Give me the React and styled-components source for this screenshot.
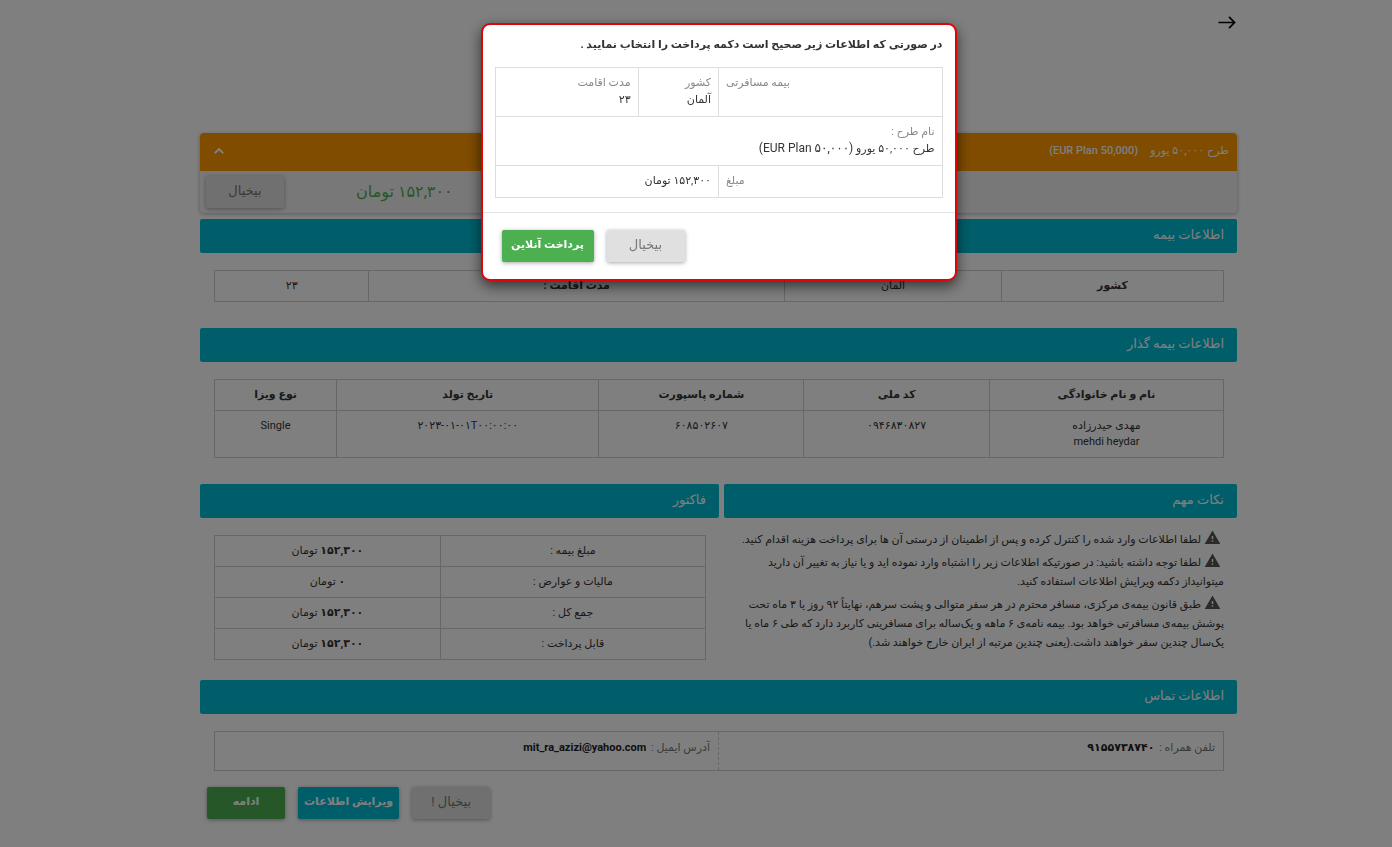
import React from "react";
import styled, { createGlobalStyle } from "styled-components";
import { MdExpandLess, MdWarning } from "react-icons/md";

const GlobalStyle = createGlobalStyle`
  * {
    box-sizing: border-box;
  }
  body {
    margin: 0;
    background: #ffffff;
    color: #333333;
    font-family: Roboto, "DejaVu Sans", sans-serif;
    font-size: 11px;
    line-height: 16px;
  }
`;

const Page = styled.div`
  min-height: 100vh;
  padding: 14px 155px 28px 200px;
`;

const TopBar = styled.header`
  display: flex;
  height: 119px;
`;

const BackLink = styled.a`
  height: 18px;
  color: #000000;

  svg {
    display: block;
  }
`;

const PlanCard = styled.section`
  margin-bottom: 6px;

  border-radius: 4px;
  background: #f1f1f1;
  box-shadow: 0 1px 4px rgba(0, 0, 0, 0.3);
`;

const PlanHeader = styled.div`
  display: flex;
  align-items: center;
  gap: 12px;

  height: 38px;
  padding: 0 8px 2px 10px;

  border-radius: 4px 4px 0 0;
  background: #ff9800;
  color: #ffffff;
  font-weight: 500;
`;

const CollapseButton = styled.button`
  display: flex;
  margin-right: auto;
  padding: 0;

  border: none;
  background: none;
  color: #ffffff;
  font-size: 18px;

  path:last-child {
    stroke: currentColor;
    stroke-width: 1;
  }
`;

const PlanBody = styled.div`
  display: flex;
  align-items: center;
  justify-content: flex-end;
  gap: 72px;

  height: 42px;
  padding: 0 6px;
`;

const Price = styled.span`
  color: #4caf50;
  font-size: 16px;
  line-height: 24px;
`;

const COLORS = {
  gray: { background: "#e0e0e0", color: "#777777" },
  green: { background: "#4caf50", color: "#ffffff" },
  teal: { background: "#00bcd4", color: "#ffffff" },
};

const Button = styled.button`
  min-width: ${({ $wide }) => ($wide ? "92px" : "78px")};
  height: 32px;
  padding: 0 6px 3px;

  border: none;
  border-radius: 2px;
  background: ${({ $tone }) => COLORS[$tone].background};
  color: ${({ $tone }) => COLORS[$tone].color};
  box-shadow: 0 1px 4px rgba(0, 0, 0, 0.35);

  font-family: inherit;
  font-size: ${({ $tone }) => ($tone === "gray" ? "13px" : "11px")};
  font-weight: ${({ $tone }) => ($tone === "gray" ? "normal" : "bold")};
  white-space: nowrap;
`;

const SectionTitle = styled.h2`
  height: 34px;
  margin: 0;
  padding: 6px 13px;

  border-radius: 2px;
  background: #00bcd4;
  color: #ffffff;
  font-size: 13px;
  font-weight: 500;
  line-height: 20px;
`;

const SectionBody = styled.div`
  padding: 17px 13px 26px 14px;
`;

const InvoiceBody = styled(SectionBody)`
  padding-bottom: 20px;
`;

const ContactBody = styled(SectionBody)`
  padding-bottom: 16px;
`;

const Table = styled.table`
  width: 100%;

  border-collapse: collapse;
  table-layout: fixed;

  th,
  td {
    height: 31px;
    padding: 7px;

    border: 1px solid #cfcfcf;
    text-align: center;
    vertical-align: top;
  }
`;

const Columns = styled.div`
  display: grid;
  grid-template-columns: 513fr 519fr;
  gap: 5px;
`;

const Notes = styled.div`
  padding: 11px 13px 0 0;

  line-height: 19px;
  white-space: nowrap;

  p {
    margin: 0 0 3px;
  }
  svg {
    margin: 0 3px;

    color: #555555;
    font-size: 17px;
    vertical-align: -3px;
  }
`;

const Contact = styled.div`
  display: grid;
  grid-template-columns: 1fr 1fr;

  height: 40px;

  border: 1px solid #cfcfcf;
  color: #777777;

  div {
    padding: 8px;
  }
  div + div {
    border-right: 1px dashed #cfcfcf;
  }
  strong {
    margin-right: 2px;
    color: #222222;
  }
`;

const Actions = styled.div`
  display: flex;
  justify-content: flex-end;
  gap: 13px;

  padding: 0 7px;
`;

const Overlay = styled.div`
  position: fixed;
  inset: 0;

  display: flex;
  align-items: flex-start;
  justify-content: center;

  padding: 23px 155px 0 200px;

  background: rgba(0, 0, 0, 0.5);
`;

const Dialog = styled.div`
  width: 476px;

  border: 2px solid #dd0508;
  border-radius: 9px;
  background: #ffffff;
  box-shadow: 0 5px 14px rgba(0, 0, 0, 0.6);
`;

const DialogBody = styled.div`
  padding: 10px 12px 14px;

  h1 {
    margin: 0 0 12px;

    font-size: 11px;
    font-weight: bold;
    line-height: 20px;
    white-space: nowrap;
  }
`;

const DialogTable = styled(Table)`
  line-height: 17px;

  td {
    padding: 6px 7px 8px;

    border-color: #dddddd;
    text-align: right;
  }
  .caption {
    text-align: left;
  }
  .label {
    display: block;
    color: #888888;
  }
  .latin {
    font-size: 12px;
  }
`;

const DialogFooter = styled.div`
  display: flex;
  justify-content: flex-end;
  gap: 13px;

  padding: 17px 19px;

  border-top: 1px solid #e5e5e5;
`;

const INVOICE = [
  ["مبلغ بیمه :", "۱۵۲,۳۰۰"],
  ["مالیات و عوارض :", "۰"],
  ["جمع کل :", "۱۵۲,۳۰۰"],
  ["قابل پرداخت :", "۱۵۲,۳۰۰"],
];

const ColumnWidths = ({ widths }) => (
  <colgroup>
    {widths.map((width, index) => (
      <col key={index} style={{ width: `${width}%` }} />
    ))}
  </colgroup>
);

const ConfirmDialog = () => (
  <Overlay>
    <Dialog role="dialog" aria-modal="true" aria-labelledby="confirm-title">
      <DialogBody>
        <h1 id="confirm-title">
          در صورتی که اطلاعات زیر صحیح است دکمه پرداخت را انتخاب نمایید .
        </h1>
        <DialogTable>
          <ColumnWidths widths={[50, 18, 32]} />
          <tbody>
            <tr>
              <td className="caption">
                <span className="label">بیمه مسافرتی</span>
              </td>
              <td>
                <span className="label">کشور</span>
                آلمان
              </td>
              <td>
                <span className="label">مدت اقامت</span>
                ۲۳
              </td>
            </tr>
            <tr>
              <td colSpan={3}>
                <span className="label">نام طرح :</span>
                طرح ۵۰,۰۰۰ یورو{" "}
                <bdi dir="ltr" className="latin">
                  (EUR Plan ۵۰,۰۰۰)
                </bdi>
              </td>
            </tr>
            <tr>
              <td className="caption">
                <span className="label">مبلغ</span>
              </td>
              <td colSpan={2}>۱۵۲,۳۰۰ تومان</td>
            </tr>
          </tbody>
        </DialogTable>
      </DialogBody>
      <DialogFooter>
        <Button type="button" $tone="gray">
          بیخیال
        </Button>
        <Button type="button" $tone="green" $wide>
          پرداخت آنلاین
        </Button>
      </DialogFooter>
    </Dialog>
  </Overlay>
);

const App = () => {
  return (
    <div dir="rtl" lang="fa">
      <GlobalStyle />
      <Page>
        <TopBar>
          <BackLink href="#" aria-label="بازگشت">
            <svg width="20" height="18" viewBox="0 0 20 18" fill="none">
              <path
                d="M1.5 8.5H17.5M12 2.8L17.6 8.5L12 14.2"
                stroke="currentColor"
                strokeWidth="1.7"
              />
            </svg>
          </BackLink>
        </TopBar>

        <PlanCard>
          <PlanHeader>
            <span>طرح ۵۰,۰۰۰ یورو</span>
            <bdi dir="ltr">(EUR Plan 50,000)</bdi>
            <CollapseButton type="button" aria-label="بستن">
              <MdExpandLess />
            </CollapseButton>
          </PlanHeader>
          <PlanBody>
            <Price>۱۵۲,۳۰۰ تومان</Price>
            <Button type="button" $tone="gray">
              بیخیال
            </Button>
          </PlanBody>
        </PlanCard>

        <SectionTitle>اطلاعات بیمه</SectionTitle>
        <SectionBody>
          <Table>
            <ColumnWidths widths={[22, 21.5, 41.2, 15.3]} />
            <tbody>
              <tr>
                <th>کشور</th>
                <td>آلمان</td>
                <th>مدت اقامت :</th>
                <td>۲۳</td>
              </tr>
            </tbody>
          </Table>
        </SectionBody>

        <SectionTitle>اطلاعات بیمه گذار</SectionTitle>
        <SectionBody>
          <Table>
            <ColumnWidths widths={[23.2, 18.4, 20.3, 26, 12.1]} />
            <thead>
              <tr>
                <th>نام و نام خانوادگی</th>
                <th>کد ملی</th>
                <th>شماره پاسپورت</th>
                <th>تاریخ تولد</th>
                <th>نوع ویزا</th>
              </tr>
            </thead>
            <tbody>
              <tr>
                <td>
                  مهدی حیدرزاده
                  <br />
                  mehdi heydar
                </td>
                <td>۰۹۴۶۸۳۰۸۲۷</td>
                <td>۶۰۸۵۰۲۶۰۷</td>
                <td>
                  <bdi dir="ltr">۲۰۲۳-۰۱-۰۱T۰۰:۰۰:۰۰</bdi>
                </td>
                <td>Single</td>
              </tr>
            </tbody>
          </Table>
        </SectionBody>

        <Columns>
          <section>
            <SectionTitle>نکات مهم</SectionTitle>
            <Notes>
              <p>
                <MdWarning />
                لطفا اطلاعات وارد شده را کنترل کرده و پس از اطمینان از درستی آن
                ها برای پرداخت هزینه اقدام کنید.
              </p>
              <p>
                <MdWarning />
                لطفا توجه داشته باشید: در صورتیکه اطلاعات زیر را اشتباه وارد
                نموده اید و یا نیاز به تغییر آن دارید
                <br />
                میتوانیداز دکمه ویرایش اطلاعات استفاده کنید.
              </p>
              <p>
                <MdWarning />
                طبق قانون بیمه‌ی مرکزی، مسافر محترم در هر سفر متوالی و پشت
                سرهم، نهایتاً ۹۲ روز یا ۳ ماه تحت
                <br />
                پوشش بیمه‌ی مسافرتی خواهد بود. بیمه نامه‌ی ۶ ماهه و یک‌ساله
                برای مسافرینی کاربرد دارد که طی ۶ ماه یا
                <br />
                یک‌سال چندین سفر خواهند داشت.(یعنی چندین مرتبه از ایران خارج
                خواهند شد.)
              </p>
            </Notes>
          </section>
          <section>
            <SectionTitle>فاکتور</SectionTitle>
            <InvoiceBody>
              <Table>
                <ColumnWidths widths={[54, 46]} />
                <tbody>
                  {INVOICE.map(([label, amount]) => (
                    <tr key={label}>
                      <td>{label}</td>
                      <td>
                        <strong>{amount}</strong> تومان
                      </td>
                    </tr>
                  ))}
                </tbody>
              </Table>
            </InvoiceBody>
          </section>
        </Columns>

        <SectionTitle>اطلاعات تماس</SectionTitle>
        <ContactBody>
          <Contact>
            <div>
              تلفن همراه : <strong>۹۱۵۵۷۳۸۷۴۰</strong>
            </div>
            <div>
              آدرس ایمیل : <strong>mit_ra_azizi@yahoo.com</strong>
            </div>
          </Contact>
        </ContactBody>

        <Actions>
          <Button type="button" $tone="gray">
            بیخیال !
          </Button>
          <Button type="button" $tone="teal" $wide>
            ویرایش اطلاعات
          </Button>
          <Button type="button" $tone="green">
            ادامه
          </Button>
        </Actions>
      </Page>
      <ConfirmDialog />
    </div>
  );
};

export default App;
